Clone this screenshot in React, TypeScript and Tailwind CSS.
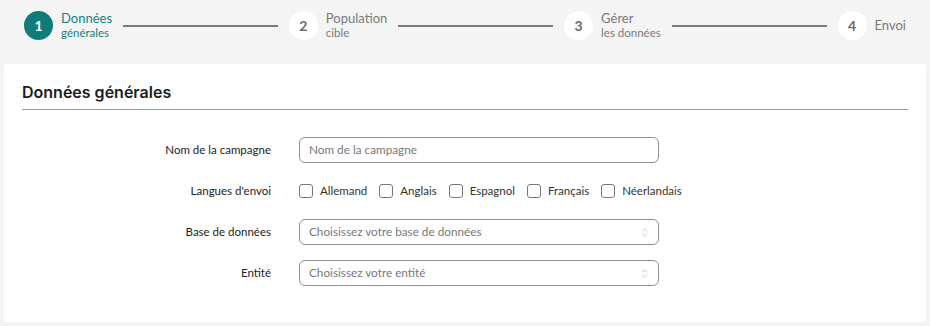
import { Fragment } from 'react'
import { ChevronsUpDown } from 'lucide-react'

const steps = [
  { n: 1, title: 'Données', sub: 'générales', active: true },
  { n: 2, title: 'Population', sub: 'cible' },
  { n: 3, title: 'Gérer', sub: 'les données' },
  { n: 4, title: 'Envoi' },
]

const langues = ['Allemand', 'Anglais', 'Espagnol', 'Français', 'Néerlandais']

function Step({ n, title, sub, active }: { n: number; title: string; sub?: string; active?: boolean }) {
  return (
    <div className="flex items-center gap-[8px] shrink-0">
      <div
        className={
          active
            ? 'w-[29px] h-[29px] rounded-full bg-[#0f7c79] text-white flex items-center justify-center text-[14px] font-bold'
            : 'w-[29px] h-[29px] rounded-full bg-white text-[#6b6b6b] flex items-center justify-center text-[14px] font-bold'
        }
      >
        {n}
      </div>
      <div className={active ? 'text-[#15827f] leading-none' : 'text-[#7a7a7a] leading-none'}>
        <div className="text-[13px]">{title}</div>
        {sub && <div className="text-[11.5px] mt-[2px]">{sub}</div>}
      </div>
    </div>
  )
}

function Row({ label, children }: { label: string; children: React.ReactNode }) {
  return (
    <div className="flex items-center h-[26px]">
      <div className="w-[267px] text-right text-[11.5px] text-[#222] pr-[28px] box-content">{label}</div>
      <div>{children}</div>
    </div>
  )
}

function SelectBox({ placeholder }: { placeholder: string }) {
  return (
    <div className="w-[360px] h-[26px] border border-[#8f8f8f] rounded-[6px] flex items-center justify-between pl-[9px] pr-[8px] text-[11.75px] text-[#777]">
      <span>{placeholder}</span>
      <ChevronsUpDown className="w-[11px] h-[11px] text-[#aaa]" strokeWidth={1.5} />
    </div>
  )
}

export default function App() {
  return (
    <div className="w-[930px] h-[326px] bg-[#f3f4f3] pt-[11px] px-[4px]" style={{ fontFamily: 'Lato, "Open Sans", sans-serif' }}>
      {/* stepper */}
      <div className="flex items-center pl-[20px] pr-[20px] h-[29px]">
        {steps.map((s, i) => (
          <Fragment key={s.n}>
            <Step {...s} />
            {i < steps.length - 1 && <div className="flex-1 h-[2px] bg-[#7a7a7a] mx-[11px]" />}
          </Fragment>
        ))}
      </div>

      {/* card */}
      <div className="bg-white rounded-[4px] mt-[24px] h-[258px] px-[18px] pt-[16px]">
        <h1 className="text-[16px] font-semibold text-[#1c1c1c] pb-[5px] border-b border-[#9a9a9a]" style={{ fontFamily: 'Inter, sans-serif' }}>
          Données générales
        </h1>

        <div className="flex flex-col gap-[15px] mt-[27px] -ml-[18px]">
          <Row label="Nom de la campagne">
            <div className="w-[360px] h-[26px] border border-[#8f8f8f] rounded-[6px] flex items-center pl-[9px] text-[11.75px] text-[#777]">
              Nom de la campagne
            </div>
          </Row>
          <Row label="Langues d'envoi">
            <div className="flex items-center gap-[12px]">
              {langues.map((l) => (
                <label key={l} className="flex items-center gap-[7px] text-[11.5px] text-[#333]">
                  <span className="w-[14px] h-[14px] border border-[#777] rounded-[3px]" />
                  {l}
                </label>
              ))}
            </div>
          </Row>
          <Row label="Base de données">
            <SelectBox placeholder="Choisissez votre base de données" />
          </Row>
          <Row label="Entité">
            <SelectBox placeholder="Choisissez votre entité" />
          </Row>
        </div>
      </div>
    </div>
  )
}
